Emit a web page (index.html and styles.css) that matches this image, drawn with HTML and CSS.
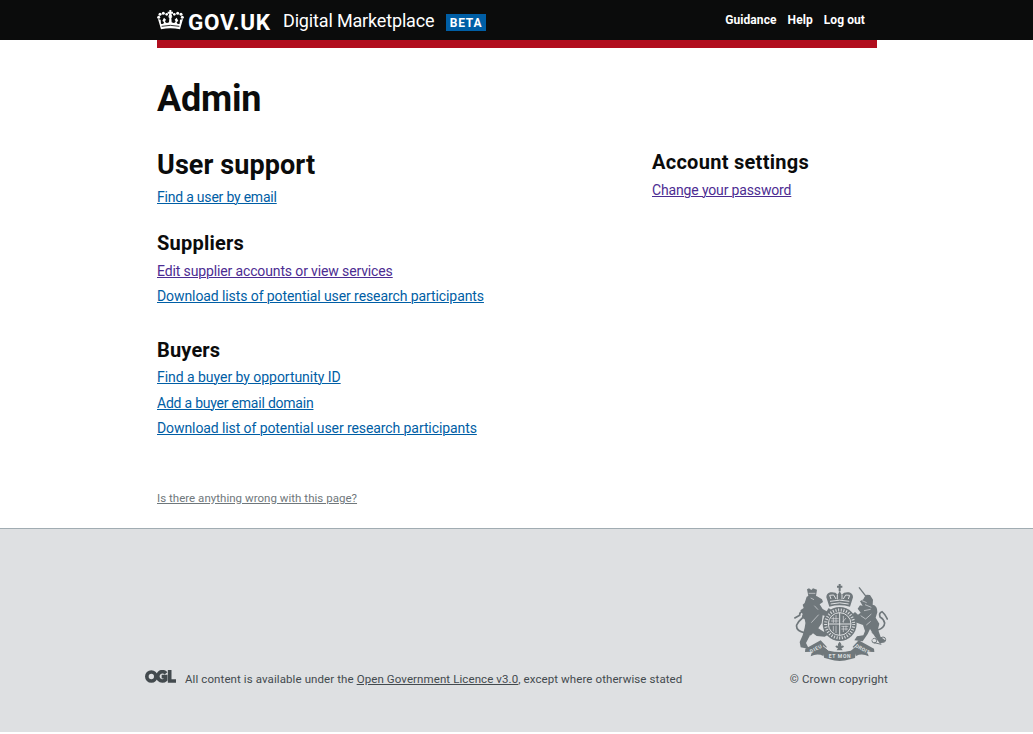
FILE: index.html
```html
<!DOCTYPE html>
<html lang="en">
<head>
<meta charset="utf-8">
<title>Admin – Digital Marketplace</title>
<link rel="stylesheet" href="styles.css">
</head>
<body>
<header class="header">
  <div class="header-inner">
    <a class="logo" href="#">
      <svg class="crown" viewBox="0 0 81 60" aria-hidden="true">
        <g fill="#fff">
          <path d="M37 0h6v5h5v6h-5l3 9h-12l3-9h-5V5h5z"/>
          <circle cx="5" cy="22" r="4.500"/><circle cx="9" cy="13" r="4.500"/><circle cx="19" cy="9.500" r="4.500"/><circle cx="29" cy="13" r="4"/>
          <circle cx="76" cy="22" r="4.500"/><circle cx="72" cy="13" r="4.500"/><circle cx="62" cy="9.500" r="4.500"/><circle cx="52" cy="13" r="4"/>
          <path d="M3 27l9 31q28-6 57 0l9-31-9 2-1 12q-9 3-9-5l5-3-5-10-6 6 3 5q-2 8-12 3l-1-13 3-3-6-4-6 4 3 3-1 13q-10 5-12-3l3-5-6-6-5 10 5 3q0 8-9 5l-1-12z"/>
        </g>
        <path d="M14 49q26-6 53 0" fill="none" stroke="#0b0c0c" stroke-width="2.500"/>
      </svg>
      <span class="logo-text">GOV.UK</span>
    </a>
    <span class="service">Digital Marketplace</span>
    <span class="beta">BETA</span>
    <nav class="nav"><a href="#">Guidance</a><a href="#">Help</a><a href="#">Log out</a></nav>
  </div>
</header>
<div class="bar"></div>
<main class="main">
  <h1 class="title">Admin</h1>
  <div class="columns">
    <div class="col-main">
      <section class="group group-support">
        <h2 class="heading-large">User support</h2>
        <p class="item"><a class="link w-find-user" href="#">Find a user by email</a></p>
      </section>
      <section class="group group-suppliers">
        <h2 class="heading w-suppliers">Suppliers</h2>
        <p class="item"><a class="link visited w-edit" href="#">Edit supplier accounts or view services</a></p>
        <p class="item"><a class="link w-lists" href="#">Download lists of potential user research participants</a></p>
      </section>
      <section class="group group-buyers">
        <h2 class="heading w-buyers">Buyers</h2>
        <p class="item"><a class="link w-opportunity" href="#">Find a buyer by opportunity ID</a></p>
        <p class="item"><a class="link w-domain" href="#">Add a buyer email domain</a></p>
        <p class="item"><a class="link w-list" href="#">Download list of potential user research participants</a></p>
      </section>
    </div>
    <div class="col-side">
      <h2 class="heading w-account">Account settings</h2>
      <p class="item"><a class="link visited w-password" href="#">Change your password</a></p>
    </div>
  </div>
  <a class="report" href="#">Is there anything wrong with this page?</a>
</main>
<footer class="footer">
  <div class="footer-inner">
    <svg class="ogl" viewBox="0 0 93 39" aria-hidden="true" fill="none" stroke="#434a4e" stroke-width="11">
      <circle cx="19" cy="19.500" r="13.500"/>
      <path d="M63 10A14 14 0 1 0 62 29V20H50"/>
      <path d="M74 0v33h19"/>
    </svg>
    <p class="licence"><span>All content is available under the <a href="#">Open Government Licence v3.0</a>, except where otherwise stated</span></p>
    <div class="copyright">
      <svg class="crest" viewBox="42 28 282 231" aria-hidden="true">
        <g fill="#6f777b">
          <path d="M176 28h6v5h5v6h-5v11h-6V39h-5v-6h5z"/>
          <path d="M148 96l-9-28q0-12 12-15 16-2 22 7l6-11 6 11q8-9 22-7 12 3 12 15l-9 28q-31-8-62 0z"/>
          <path d="M81 44l6-3 7 5 5-5 12 4-3 19H85z"/>
          <path d="M80 66q15-8 31-1l15 9 3 8-10 7 9 14 12 7 6-10 9 7-9 20-18-5-3 24-10 15 16 10 17-9 5 13-19 11-24-2-11-8-12 12-9 17 9 18-25-5-3-16 9-20 6-23q5-13 0-25-12-3-6-16l-7-11 10-7-3-10 6-5z"/>
          <path d="M260 60l10 1 9 14-1 15q15 3 14 23l-5 16 11 18-4 17 8 23 16 11-18 9-16-22-14-22-7 15-15 22-25-3 8-12 19-3 5-13-6-18-25-9-9-21 10-9 9 8 8-6-9-12 7-10 8 1-8-13 10-6 4-8z"/>
          <circle cx="179" cy="148" r="51"/>
          <path d="M76 222l46-25 18 19-10 28q-18-9-38 1l4-14-21 1z"/>
          <path d="M282 222l-46-25-18 19 10 28q18-9 38 1l-4-14 21 1z"/>
          <path d="M128 212l18 16q33 8 66 0l18-16-5 38-15 4q-31 10-62 0l-16-5z"/>
        </g>
        <g fill="none" stroke="#6f777b" stroke-width="5">
          <path d="M237 38l21 27" stroke-width="4"/>
          <path d="M72 174q-25-6-22-23 6-12 17-21 9-11 1-20-10 3-9 12l-16 9"/>
          <path d="M293 166q20-6 21-21-3-12-13-17-6-13 5-17 8 6 17 24"/>
          <path d="M275 173l25 17M282 204l22 5" stroke-width="3"/>
          <circle cx="309" cy="195" r="8" stroke-width="3"/>
          <circle cx="283" cy="198" r="7" stroke-width="3"/>
        </g>
        <g fill="none" stroke="#dee0e2" stroke-width="3">
          <circle cx="179" cy="148" r="34"/>
          <circle cx="179" cy="148" r="42" stroke-width="9" stroke-dasharray="3 5"/>
          <path d="M179 114v68M145 148h68"/>
          <path d="M154 132h22M153 139h23M160 126v19M168 121v24M184 155h21M184 163h20M190 154v18M198 153v15M190 124v20M198 130l-10 12M160 154v16M168 153v22" stroke-width="2"/>
          <path d="M150 80q29-7 58 0M152 88q27-7 54 0M153 73l-4-11 12-1 7 12M190 73l7-12 12 1-4 11M172 60v14M186 60v14"/>
          <path d="M86 56h20M92 70l10 5M103 93l11 12M116 120l-22 24M91 181l-6 22M255 90l19 8M242 123l15 10 17-15M259 151l13-11M275 177l4 22M246 78l14 6M252 108l20-4" stroke-width="2"/>
          <path d="M179 200v28" stroke-width="18"/>
          <path d="M129 213l17 14M229 213l-17 14"/>
        </g>
        <path d="M179 201q8 8 4 14 5-5 9 0-2 6-8 5l4 7h-18l4-7q-6 1-8-5 4-5 9 0-4-6 4-14z" fill="#6f777b"/>
        <g class="motto" fill="#dee0e2">
          <text x="146" y="250" textLength="66">ET MON</text>
          <text x="93" y="236" textLength="38" transform="rotate(-28 93 236)">DIEU</text>
          <text x="225" y="217" textLength="46" transform="rotate(28 225 217)">DROIT</text>
        </g>
      </svg>
      <span class="copy-text">© Crown copyright</span>
    </div>
  </div>
</footer>
</body>
</html>
```
FILE: styles.css
```css
* { box-sizing: border-box; }
body { margin: 0; background: #fff; color: #0b0c0c; font-family: Roboto, sans-serif; }
h1, h2, p { margin: 0; }
a { color: inherit; }
.header { height: 40px; background: #0b0c0c; color: #fff; }
.header-inner { width: 720px; margin-left: 157px; height: 40px; display: flex; align-items: flex-start; }
.logo { display: flex; text-decoration: none; width: 126px; }
.crown { width: 27px; height: 20px; margin-top: 10px; }
.logo-text { font: bold 22.5px/30px Roboto, sans-serif; letter-spacing: 0.7px; margin: 7px 0 0 4px; white-space: nowrap; }
.service { font-size: 18px; line-height: 24px; letter-spacing: -0.16px; margin-top: 9px; width: 163px; white-space: nowrap; }
.beta { width: 40px; height: 17px; margin-top: 14px; background: #005ea5; font: bold 12px/18px Roboto, sans-serif; text-align: center; letter-spacing: 0.8px; }
.nav { margin: 10px 12px 0 auto; display: flex; gap: 11px; font: bold 12px/20px Roboto, sans-serif; letter-spacing: 0.08px; white-space: nowrap; }
.nav a { text-decoration: none; }
.bar { width: 720px; height: 8px; margin-left: 157px; background: #b10e1e; }
.main { width: 720px; height: 480px; margin-left: 157px; padding-top: 30px; }
.title { font: bold 36px/42px Roboto, sans-serif; letter-spacing: -0.2px; }
.columns { display: grid; grid-template-columns: 495px 1fr; height: 342px; padding-top: 29px; }
.heading-large { font-size: 27px; line-height: 32px; letter-spacing: 0.08px; margin-bottom: 4px; }
.heading { font-size: 20px; line-height: 26px; margin-bottom: 3px; }
.w-suppliers { letter-spacing: 0.22px; }
.w-buyers { letter-spacing: 0.16px; margin-bottom: 2px; }
.w-account { letter-spacing: 0.28px; }
.group-support { height: 81px; }
.group-suppliers { height: 107px; }
.item { height: 25.5px; font-size: 14px; line-height: 25px; white-space: nowrap; }
.group-suppliers .item { height: 25px; }
.link { color: #005ea5; text-underline-offset: 1px; text-decoration-thickness: 1px; }
.visited { color: #4c2c92; }
.w-find-user { letter-spacing: -0.21px; }
.w-edit { letter-spacing: -0.13px; }
.w-lists, .w-list { letter-spacing: -0.09px; }
.w-opportunity { letter-spacing: -0.04px; }
.w-domain { letter-spacing: -0.22px; }
.w-password { letter-spacing: -0.15px; }
.report { display: block; width: max-content; font-size: 11.5px; line-height: 16px; letter-spacing: 0.03px; color: #6f777b; margin-top: 28px; text-underline-offset: 1px; }
.footer { height: 204px; background: #dee0e2; border-top: 1px solid #a1acb2; color: #434a4e; font-size: 11.5px; }
.footer-inner { width: 743px; height: 158px; margin-left: 145px; display: flex; align-items: flex-end; }
.ogl { width: 31px; height: 13px; margin: 0 9px 4px 0; }
.licence { line-height: 16px; letter-spacing: 0.095px; white-space: nowrap; }
.licence a { text-underline-offset: 1px; }
.copyright { margin-left: auto; display: flex; flex-direction: column; align-items: flex-end; line-height: 16px; letter-spacing: 0.18px; }
.crest { width: 94px; height: 77px; margin-bottom: 10px; }
.motto { font: bold 15px Roboto, sans-serif; }
```
